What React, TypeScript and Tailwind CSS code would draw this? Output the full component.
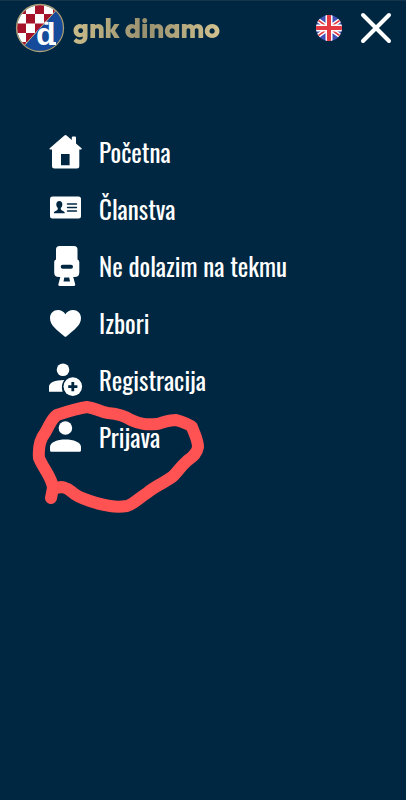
import type { ReactNode } from 'react';

interface MenuItem {
  id: string;
  label: string;
  icon: ReactNode;
}

function ClubCrest() {
  return (
    <svg viewBox="0 0 50 50" className="h-[50px] w-[50px] shrink-0" aria-hidden="true">
      <defs>
        <clipPath id="crest-round">
          <circle cx="25" cy="25" r="23" />
        </clipPath>
        <clipPath id="crest-checks">
          <path d="M0 0H48L6 46H0Z" />
        </clipPath>
      </defs>
      <g clipPath="url(#crest-round)">
        <rect width="50" height="50" fill="#164b9c" />
        <g clipPath="url(#crest-checks)">
          <rect width="50" height="50" fill="#ffffff" />
          <path
            fill="#a5132b"
            d="M11 -7h9v9h-9zM29 -7h9v9h-9zM2 2h9v9h-9zM20 2h9v9h-9zM38 2h9v9h-9zM11 11h9v9.5h-9zM29 11h9v9.5h-9zM2 20.5h9v9.5h-9zM20 20.5h9v9.5h-9zM11 30h9v9h-9zM2 39h9v9h-9z"
          />
        </g>
        <path d="M45 3L7 45" stroke="#b9ad80" strokeWidth="1" />
      </g>
      <circle cx="25" cy="25" r="23.5" fill="none" stroke="#a99f78" strokeWidth="1.3" />
      <text
        x="21"
        y="42"
        fontSize="32"
        fontWeight="700"
        fill="#ffffff"
        stroke="#164b9c"
        strokeWidth="2"
        paintOrder="stroke"
        className="font-['Liberation_Sans',sans-serif]"
      >
        d
      </text>
      <path d="M29.5 18.8h4v3h-4zM37 39h4v3h-4z" fill="#ffffff" />
    </svg>
  );
}

function BritishFlag() {
  return (
    <svg viewBox="0 0 26 26" className="h-[26px] w-[26px]" aria-hidden="true">
      <defs>
        <clipPath id="flag-round">
          <circle cx="13" cy="13" r="13" />
        </clipPath>
      </defs>
      <g clipPath="url(#flag-round)">
        <rect width="26" height="26" fill="#3f51b5" />
        <path d="M-4 1L30 25M30 1L-4 25" stroke="#ffffff" strokeWidth="4.5" />
        <path d="M-4 1L30 25M30 1L-4 25" stroke="#e53942" strokeWidth="1.6" />
        <path d="M13 0V26M0 13H26" stroke="#ffffff" strokeWidth="7" />
        <path d="M13 0V26M0 13H26" stroke="#e53942" strokeWidth="4" />
      </g>
    </svg>
  );
}

function MenuIcon({ children }: { children: ReactNode }) {
  return (
    <svg viewBox="0 0 34 41" className="h-[41px] w-[34px] shrink-0 fill-white" aria-hidden="true">
      {children}
    </svg>
  );
}

const MENU_ITEMS: MenuItem[] = [
  {
    id: 'pocetna',
    label: 'Početna',
    icon: (
      <path
        fillRule="evenodd"
        d="M15.4 3.5Q16.5 2.6 17.6 3.5L22.8 8V5.5Q22.8 4.5 23.8 4.5H26Q27 4.5 27 5.5V11.5L32.5 16.2Q33.2 17.2 32.2 17.6H30.3V34Q30.3 36.5 27.8 36.5H5.5Q3 36.5 3 34V17.6H1Q0 17.2 .7 16.2ZM12 22V33.2H20.6V22Z"
      />
    ),
  },
  {
    id: 'clanstva',
    label: 'Članstva',
    icon: (
      <>
        <rect x="1" y="7.5" width="31" height="22" rx="2.5" />
        <g className="fill-[#002741]">
          <ellipse cx="10.3" cy="15.5" rx="3" ry="3.6" />
          <path d="M8.8 18H11.8V20.3Q12 21.5 14.5 22.3Q15.8 22.8 15.8 24.3H4.8Q4.8 22.8 6.1 22.3Q8.6 21.5 8.8 20.3Z" />
        </g>
        <path d="M18.5 15H27.5M18.5 18.5H27.5M18.5 22H27.5" stroke="#002741" strokeWidth="1.4" strokeLinecap="round" />
      </>
    ),
  },
  {
    id: 'ne-dolazim',
    label: 'Ne dolazim na tekmu',
    icon: (
      <path
        fillRule="evenodd"
        d="M10.5 0H25Q28.5 0 28.5 3.5V13.5Q30.3 14.2 30.3 16V26.5Q30.3 31 25.5 31H24.2L26.2 38.2Q26.5 40 24.7 40H10.8Q9 40 9.4 38.2L11.3 31H10Q5.2 31 5.2 26.5V16Q5.2 14.2 7 13.5V3.5Q7 0 10.5 0ZM13.7 18.7A2 2 0 0 0 13.7 22.7H22A2 2 0 0 0 22 18.7ZM15.3 31.5L14.5 35.5H21L20.2 31.5Z"
      />
    ),
  },
  {
    id: 'izbori',
    label: 'Izbori',
    icon: (
      <path d="M15.3 33.3C8 27 1 22.5 1 15C1 10.2 4.7 7 8.8 7C12.2 7 15 8.8 16.4 11.3C17.8 8.8 20.7 7 24.1 7C28.2 7 32 10.2 32 15C32 22.5 24.8 27 17.6 33.3Q16.4 34.4 15.3 33.3Z" />
    ),
  },
  {
    id: 'registracija',
    label: 'Registracija',
    icon: (
      <>
        <circle cx="14" cy="9.7" r="6.3" />
        <path d="M0 31.7V26.8C0 22.5 6 20.2 15.2 20C12.7 23.5 12.3 27.5 13.6 31.7Z" />
        <circle cx="23.8" cy="26.6" r="9.3" />
        <path d="M23.8 22V31.2M19.2 26.6H28.4" stroke="#002741" strokeWidth="2.8" />
      </>
    ),
  },
  {
    id: 'prijava',
    label: 'Prijava',
    icon: (
      <>
        <circle cx="16.4" cy="11" r="6.8" />
        <path d="M1 33.6V30C1 25 8.5 22.5 16.4 22.5S32 25 32 30V33.6Q32 34.7 31 34.7H2Q1 34.7 1 33.6Z" />
      </>
    ),
  },
];

export default function App() {
  return (
    <div className="relative min-h-screen overflow-hidden border-t border-[#16344b] bg-[#002741] text-white">
      {/* Top bar */}
      <header className="flex h-[54px] items-center justify-between pr-3 pl-[15px]">
        <a href="#pocetna" className="flex items-center gap-2" aria-label="GNK Dinamo">
          <ClubCrest />
          <span className="bg-linear-to-r from-[#c9bb89] via-[#99906f] to-[#d2c38f] bg-clip-text font-['Outfit','Lato',sans-serif] text-[27px] leading-9 font-extrabold whitespace-nowrap text-transparent">
            gnk dinamo
          </span>
        </a>

        <div className="flex items-center gap-4">
          <button type="button" aria-label="English" className="cursor-pointer">
            <BritishFlag />
          </button>
          <button type="button" aria-label="Zatvori" className="cursor-pointer">
            <svg viewBox="0 0 36 36" className="h-9 w-9" aria-hidden="true">
              <path d="M5 5L31 31M31 5L5 31" stroke="#ffffff" strokeWidth="4" strokeLinecap="round" />
            </svg>
          </button>
        </div>
      </header>

      {/* Main menu */}
      <nav className="pt-[69px] pl-[49px]">
        <ul>
          {MENU_ITEMS.map(item => (
            <li key={item.id}>
              <a href={`#${item.id}`} className="flex h-[57px] items-center gap-4">
                <MenuIcon>{item.icon}</MenuIcon>
                <span className="pb-0.5 font-['Oswald','Liberation_Sans_Narrow',sans-serif] text-[25px] leading-8 whitespace-nowrap">
                  {item.label}
                </span>
              </a>
            </li>
          ))}
        </ul>
      </nav>

      {/* Hand-drawn marker around the login entry */}
      <svg
        viewBox="30 396 180 120"
        className="pointer-events-none absolute top-[395px] left-[30px] h-[120px] w-[180px]"
        aria-hidden="true"
      >
        <path
          d="M51 498L53 488C52 477 44 470 39 458C38 446 41 438 45 433C49 426 52 418 57 415C66 412 79 408 87 407C96 408 100 412 108 413C119 414 125 416 131 420C140 424 146 425 157 424C164 422 169 420 176 420C183 422 189 424 192 427C194 433 198 440 198 447C197 454 192 457 187 461C180 467 177 473 172 477C162 484 154 487 147 493C139 498 134 504 127 506C121 507 116 507 110 506C102 505 96 503 90 501C81 498 76 496 72 492C67 488 62 485 54 489"
          fill="none"
          stroke="#ff5252"
          strokeWidth="12"
          strokeLinecap="round"
          strokeLinejoin="round"
        />
      </svg>
    </div>
  );
}
